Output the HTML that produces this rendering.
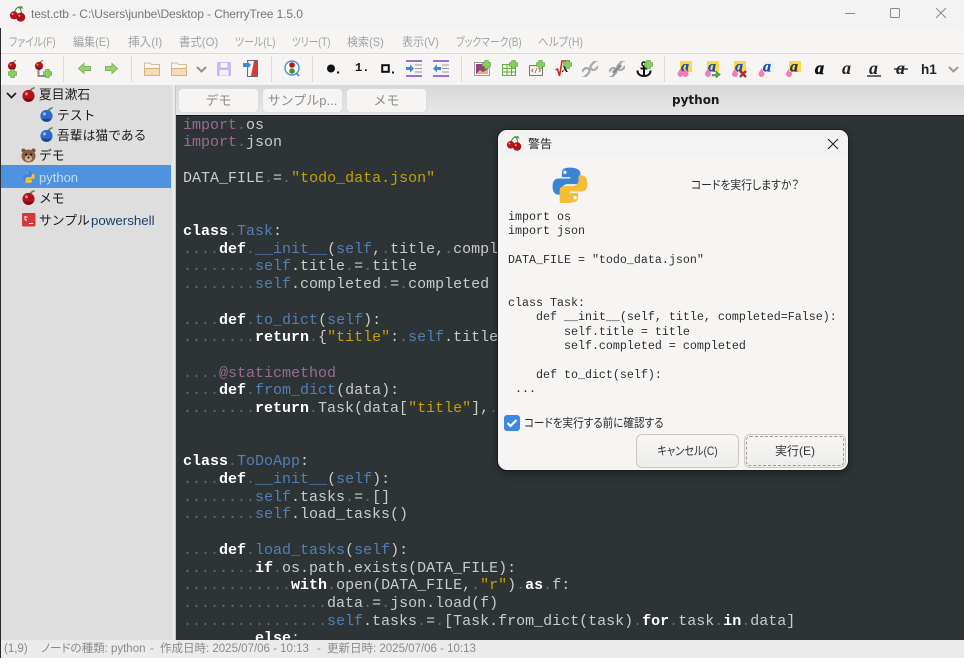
<!DOCTYPE html>
<html lang="ja"><head><meta charset="utf-8"><title>CherryTree</title>
<style>
*{box-sizing:border-box;margin:0;padding:0}
html,body{width:964px;height:658px;overflow:hidden;background:#f6f5f4}
body{position:relative;font-family:"Liberation Sans","Noto Sans CJK JP",sans-serif;color:#222}
.a{position:absolute;white-space:pre}
.p{font-feature-settings:"palt";transform-origin:0 50%}
svg{position:absolute;overflow:visible}
#tb{left:0;top:0;width:964px;height:28px;background:#f3f3f3}
#mb{left:0;top:28px;width:964px;height:26px;background:#f6f5f4;border-bottom:1px solid #dcdad8}
.m{top:34px;font-size:12px;line-height:16px;color:#a3a3a3;font-feature-settings:"palt";transform-origin:0 50%}
#tl{left:0;top:54px;width:964px;height:31px;background:#f6f5f4}
.sep{position:absolute;top:56px;width:1px;height:26px;background:#dedcda}
#tree{left:0;top:85px;width:172px;height:555px;background:#dedede}
#split{left:172px;top:85px;width:4px;height:555px;background:#e9e8e7;border-right:1px solid #c8c8c8}
#tabs{left:176px;top:85px;width:788px;height:30px;background:linear-gradient(#d8d8d8,#e6e6e6)}
.tab{position:absolute;top:88px;height:25px;background:#f6f5f4;border:1px solid #dcdcdc;border-radius:5px;text-align:center;font-size:13px;line-height:23px;color:#8d8d8d}
.t{font-size:12.8px;line-height:18px;color:#1c1c1c}
#sel{left:1px;top:165px;width:170px;height:23px;background:#4f93e0}
#code{left:176px;top:115px;width:788px;height:525px;background:#2e3436;overflow:hidden;border-top:1px solid #15191a}
#code pre{position:absolute;left:7px;top:.6px;font:15px/17.72px "Liberation Mono",monospace;color:#c9ccc6}
pre i{font-style:normal;color:#626a6c}
pre b{color:#fff}
pre em{font-style:normal;color:#4f7fb3}
pre u{text-decoration:none;color:#946c91}
pre s{text-decoration:none;color:#c4a000}
#st{left:0;top:640px;width:964px;height:18px;background:#ebebeb}
.st{top:640px;font-size:11.5px;line-height:18px;color:#8b8b8b;font-feature-settings:"palt"}
#dl{left:498px;top:130px;width:350px;height:340px;background:#f6f5f4;border-radius:9px;box-shadow:0 0 0 1px #1b1f20,0 3px 10px rgba(0,0,0,.45);overflow:hidden}
#dh{left:0;top:0;width:350px;height:28px;background:#f3f3f3}
#dcode{left:10px;top:80px;font:11.67px/14.33px "Liberation Mono",monospace;color:#2e2e2e}
.btn{position:absolute;top:304px;height:34px;border:1px solid #cdc7c2;border-radius:6px;background:linear-gradient(#f8f7f6,#eeedeb);text-align:center;font-size:12px;line-height:32px;color:#2e3436;font-feature-settings:"palt"}
.btn span{display:inline-block}
#edge{left:0;top:28px;width:1px;height:630px;background:#2a2a2a}
</style></head><body>
<svg width="0" height="0" style="position:absolute"><defs>
<symbol id="ch" viewBox="0 0 16 16"><path d="M9 7 L11.5 2.5" stroke="#4a8a2a" stroke-width="1.4" fill="none"/><path d="M10 3 L14.500 .5" stroke="#4a9a2a" stroke-width="1.6"/><circle cx="8" cy="9.500" r="6.500" fill="#b3121d"/><circle cx="5.800" cy="7.300" r="1.700" fill="#e9767c"/><path d="M2.500 12.500a6.500 6.500 0 0 0 11 0z" fill="#780d14"/></symbol>
<symbol id="bl" viewBox="0 0 16 16"><path d="M9 7 L11.5 2.5" stroke="#4a8a2a" stroke-width="1.4" fill="none"/><path d="M10 3 L14.500 .5" stroke="#4a9a2a" stroke-width="1.6"/><circle cx="8" cy="9.500" r="6.500" fill="#2f69c8"/><circle cx="5.800" cy="7.300" r="1.700" fill="#8fb8f0"/><path d="M2.500 12.500a6.500 6.500 0 0 0 11 0z" fill="#1b4390"/></symbol>
<symbol id="ch2" viewBox="0 0 20 20"><path d="M6 8 Q8 3 11 2 Q13 4 14 9" stroke="#3f7d24" stroke-width="1.1" fill="none"/><path d="M8 3 L14 1 L16 4 Q12 4 8 3z" fill="#4f9a2a"/><circle cx="5.500" cy="11.500" r="4.500" fill="#b3161f"/><circle cx="13" cy="13.500" r="5" fill="#a9121b"/><circle cx="4" cy="10" r="1.200" fill="#ee9a9a"/><circle cx="11.500" cy="12" r="1.200" fill="#ee9a9a"/></symbol>
<symbol id="py" viewBox="0 0 32 32"><path d="M15.800 .5c-7 0-7 3-7 5v3.500h7.400v1.200H5.700c-3 0-5.200 2.400-5.200 7s2 7.300 4.700 7.300h3.200v-4c0-3 2.400-5.300 5.500-5.300h7c2.500 0 4.300-1.900 4.300-4.300V5.500c0-2.600-2.500-5-9.400-5z" fill="#3b84d4"/><path d="M16.200 31.500c7 0 7-3 7-5V23h-7.400v-1.200h10.500c3 0 5.200-2.400 5.200-7s-2-7.300-4.700-7.300h-3.200v4c0 3-2.400 5.300-5.500 5.300h-7c-2.500 0-4.300 1.900-4.300 4.300v8.400c0 2.600 2.500 5 9.400 5z" fill="#f4bd38"/><circle cx="11.500" cy="4.700" r="1.500" fill="#fff"/><circle cx="20.500" cy="27.300" r="1.500" fill="#fff"/></symbol>
<symbol id="plus" viewBox="0 0 10 10"><path d="M3 .5h4v2.500h2.500v4H7v2.500H3V7H.5V3H3z" fill="#88cf62" stroke="#5aa83e" stroke-width=".7"/></symbol>
<symbol id="fold" viewBox="0 0 16 14"><path d="M.5 13.500V1h5.500l1.500 1.500h8v11z" fill="#f8f6f1" stroke="#d4bc98"/><rect x=".5" y="6.500" width="15" height="7" fill="#f5dcb2" stroke="#d0b184"/></symbol>
<symbol id="aa" viewBox="0 0 18 18"><rect x="4" y="1" width="12" height="11" fill="#ffd84a"/><text x="5" y="11.500" font-family="Liberation Serif,serif" font-style="italic" font-weight="700" font-size="16" fill="#1a4ea8" stroke="#1a4ea8" stroke-width=".3">a</text><path d="M4.500 8.500c2 3 3 4 3 5.500a3 3 0 0 1-6 0c0-1.500 1.500-3 3-5.500z" fill="#f27fb0"/><path d="M9.500 8.500c2 3 3 4 3 5.500a3 3 0 0 1-6 0c0-1.500 1.500-3 3-5.500z" fill="#f27fb0"/></symbol>
<symbol id="aa1" viewBox="0 0 18 18"><rect x="4" y="1" width="12" height="11" fill="#ffd84a"/><text x="5" y="11.500" font-family="Liberation Serif,serif" font-style="italic" font-weight="700" font-size="16" fill="#1a4ea8" stroke="#1a4ea8" stroke-width=".3">a</text><path d="M5 8.500c2 3 3 4 3 5.500a3 3 0 0 1-6 0c0-1.500 1.500-3 3-5.500z" fill="#f27fb0"/></symbol>
<symbol id="link" viewBox="0 0 16 16"><g fill="none" stroke="#a9a9a9" stroke-width="2.300"><rect x="-3" y="-3" width="6" height="11" rx="3" transform="translate(4.500 10) rotate(45)"/><rect x="-3" y="-8" width="6" height="11" rx="3" transform="translate(11.500 6) rotate(45)"/></g></symbol>
</defs></svg>

<div class="a" id="tb"></div>
<svg style="left:9px;top:5px" width="18" height="18"><use href="#ch2" width="18" height="18"/></svg>
<div class="a" style="left:31px;top:6px;font-size:12px;line-height:16px;color:#777;letter-spacing:-.1px">test.ctb - C:\Users\junbe\Desktop - CherryTree 1.5.0</div>
<svg style="left:845px;top:8px" width="100" height="12" fill="none" stroke="#8a8a8a"><path d="M0 5.500h10"/><rect x="45.500" y=".5" width="9" height="9" rx="1"/><path d="M91 0l10 10M101 0l-10 10"/></svg>

<div class="a" id="mb"></div>
<div class="a m" style="left:9px;transform:scaleX(.82)">ファイル(F)</div>
<div class="a m" style="left:73px;transform:scaleX(.92)">編集(E)</div>
<div class="a m" style="left:128px;transform:scaleX(.97)">挿入(I)</div>
<div class="a m" style="left:179px;transform:scaleX(.95)">書式(O)</div>
<div class="a m" style="left:235px;transform:scaleX(.83)">ツール(L)</div>
<div class="a m" style="left:292px;transform:scaleX(.8)">ツリー(T)</div>
<div class="a m" style="left:347px;transform:scaleX(.92)">検索(S)</div>
<div class="a m" style="left:402px;transform:scaleX(.92)">表示(V)</div>
<div class="a m" style="left:456px;transform:scaleX(.82)">ブックマーク(B)</div>
<div class="a m" style="left:538px;transform:scaleX(.88)">ヘルプ(H)</div>

<div class="a" id="tl"></div>
<i class="sep" style="left:63px"></i><i class="sep" style="left:131px"></i><i class="sep" style="left:271px"></i><i class="sep" style="left:312px"></i><i class="sep" style="left:461px"></i><i class="sep" style="left:664px"></i>

<svg style="left:7px;top:60px" width="10" height="10"><use href="#ch" width="10" height="10"/></svg>
<svg style="left:8px;top:69px" width="9" height="9"><use href="#plus" width="9" height="9"/></svg>
<svg style="left:34px;top:60px" width="10" height="10"><use href="#ch" width="10" height="10"/></svg>
<svg style="left:38px;top:70px" width="10" height="8"><path d="M.5 0v6h9" stroke="#8a8a8a" stroke-width="2" fill="none"/></svg>
<svg style="left:43px;top:69px" width="9" height="9"><use href="#plus" width="9" height="9"/></svg>
<svg style="left:78px;top:63px" width="13" height="11"><path d="M.5 5.500l5.500-5v3h6.500v4H6v3z" fill="#9ad26f" stroke="#7fb85a"/></svg>
<svg style="left:105px;top:63px" width="13" height="11"><path d="M12.500 5.500l-5.500-5v3H.5v4H7v3z" fill="#9ad26f" stroke="#7fb85a"/></svg>
<svg style="left:144px;top:62px" width="16" height="14"><use href="#fold" width="16" height="14"/></svg>
<svg style="left:171px;top:62px" width="16" height="14"><use href="#fold" width="16" height="14"/></svg>
<svg style="left:196px;top:66px" width="11" height="7"><path d="M1 1l4.500 4.500L10 1" fill="none" stroke="#8f8f8f" stroke-width="2"/></svg>
<svg style="left:217px;top:62px" width="14" height="14"><rect width="14" height="14" rx="1" fill="#cbb8ef"/><rect x="3.500" y="1" width="7" height="4.500" fill="#f6f5f4"/><rect x="2.500" y="8" width="9" height="5.500" fill="#f1eff8"/></svg>
<svg style="left:243px;top:60px" width="15" height="17"><rect x="4.500" y=".5" width="10" height="16" fill="#f2f2f2" stroke="#666"/><path d="M11 1h3v15H8z" fill="#d93a3a"/><path d="M0 3h4V1l4 4-4 4V7H0z" fill="#3d86de"/></svg>
<svg style="left:284px;top:60px" width="17" height="17"><circle cx="8" cy="8" r="7" fill="#fff" stroke="#4a8fd8" stroke-width="1.400"/><path d="M12 13l3 3" stroke="#4a8fd8" stroke-width="1.600"/><circle cx="8" cy="5" r="2.800" fill="#b3161f"/><circle cx="8" cy="11" r="2.800" fill="#4f8a2a"/></svg>

<svg style="left:326px;top:64px" width="14" height="10"><circle cx="5" cy="4.500" r="4" fill="#111"/><rect x="11" y="7.500" width="2" height="2" fill="#111"/></svg>
<div class="a" style="left:355px;top:60px;font:700 12px/17px 'Liberation Mono',monospace;color:#111">1.</div>
<svg style="left:381px;top:64px" width="14" height="10"><rect x="1.200" y="1.200" width="6.600" height="6.600" fill="none" stroke="#111" stroke-width="2"/><rect x="11" y="7.500" width="2" height="2" fill="#111"/></svg>
<svg style="left:406px;top:60px" width="16" height="17"><path d="M0 1h16M0 16h16" stroke="#9d6ed6" stroke-width="2"/><path d="M9 5h7M9 8.500h7M9 12h7" stroke="#999"/><path d="M0 7h4V4.500L8 8.500 4 12.500V10H0z" fill="#3d86de"/></svg>
<svg style="left:433px;top:60px" width="16" height="17"><path d="M0 1h16M0 16h16" stroke="#9d6ed6" stroke-width="2"/><path d="M9 5h7M9 8.500h7M9 12h7" stroke="#999"/><path d="M8 7H4V4.500L0 8.500 4 12.500V10h4z" fill="#3d86de"/></svg>

<svg style="left:474px;top:62px" width="16" height="14"><rect x=".5" y=".5" width="15" height="13" fill="#fff" stroke="#9a9a9a"/><rect x="2" y="2" width="12" height="10" fill="#93407f"/><path d="M2 12l4-4 3 2 5-3v5z" fill="#e9b36a"/></svg>
<svg style="left:482px;top:60px" width="9" height="9"><use href="#plus" width="9" height="9"/></svg>
<svg style="left:502px;top:64px" width="14" height="12"><rect x=".5" y=".5" width="13" height="11" fill="#eaf5e0" stroke="#6fa84e"/><path d="M.5 4.500h13M.5 8h13M5 .5v11M9.500 .5v11" stroke="#6fa84e"/></svg>
<svg style="left:509px;top:60px" width="9" height="9"><use href="#plus" width="9" height="9"/></svg>
<svg style="left:529px;top:65px" width="15" height="11"><rect x=".5" y=".5" width="13" height="10" fill="#f4f4f4" stroke="#777"/><path d="M4 4L2.500 5.500 4 7M10 4l1.500 1.500L10 7M8 3L6 8" stroke="#e0602a" fill="none"/></svg>
<svg style="left:536px;top:60px" width="9" height="9"><use href="#plus" width="9" height="9"/></svg>
<svg style="left:555px;top:60px" width="15" height="18"><path d="M.5 10l2-1 2 7L7 1h8" fill="none" stroke="#d81e1e" stroke-width="1.500"/></svg>
<div class="a" style="left:562px;top:60px;font:italic 700 13px/16px 'Liberation Serif',serif;color:#111">x</div>
<svg style="left:563px;top:60px" width="9" height="9"><use href="#plus" width="9" height="9"/></svg>
<svg style="left:582px;top:61px" width="16" height="16"><use href="#link" width="16" height="16"/></svg>
<svg style="left:609px;top:61px" width="16" height="16"><use href="#link" width="16" height="16"/><path d="M4 12L12 4" stroke="#8d8d8d" stroke-width="3"/></svg>
<svg style="left:637px;top:61px" width="16" height="17"><circle cx="7" cy="3" r="2" fill="none" stroke="#111" stroke-width="1.500"/><path d="M7 5v10M3.500 7.500h7M.5 9.500c0 4 3 5.500 6.500 5.500s6.500-1.500 6.500-5.500" fill="none" stroke="#111" stroke-width="2"/></svg>
<svg style="left:644px;top:60px" width="9" height="9"><use href="#plus" width="9" height="9"/></svg>

<svg style="left:676px;top:60px" width="18" height="18"><use href="#aa" width="18" height="18"/></svg>
<svg style="left:703px;top:60px" width="18" height="18"><use href="#aa1" width="18" height="18"/></svg>
<svg style="left:712px;top:71px" width="9" height="7"><path d="M0 3.500h4V0l4.500 3.500L4 7V5H0z" fill="#5aa53a" stroke="#3f8228" stroke-width=".5"/></svg>
<svg style="left:730px;top:60px" width="18" height="18"><use href="#aa1" width="18" height="18"/></svg>
<svg style="left:739px;top:70px" width="8" height="8"><path d="M1 1l6 6M7 1L1 7" stroke="#b52a2a" stroke-width="2.400"/></svg>
<svg style="left:757px;top:60px" width="18" height="18"><path d="M4.500 8.500c2 3 3 4 3 5.500a3 3 0 0 1-6 0c0-1.500 1.500-3 3-5.500z" fill="#f27fb0"/><rect x="6" y="1" width="12" height="11" fill="#eef0f8"/><text x="6" y="11.500" font-family="Liberation Serif,serif" font-style="italic" font-weight="700" font-size="16" fill="#1a4ea8" stroke="#1a4ea8" stroke-width=".3">a</text></svg>
<svg style="left:785px;top:60px" width="18" height="18"><path d="M4 8.500c2 3 3 4 3 5.500a3 3 0 0 1-6 0c0-1.500 1.500-3 3-5.500z" fill="#f27fb0"/><rect x="4" y="1" width="12" height="11" fill="#ffd84a"/><text x="5" y="11.500" font-family="Liberation Serif,serif" font-style="italic" font-weight="700" font-size="16" fill="#333" stroke="#333" stroke-width=".3">a</text></svg>
<div class="a" style="left:815px;top:58px;font:italic 700 18px/20px 'Liberation Serif',serif;color:#111;-webkit-text-stroke:.6px #111">a</div>
<div class="a" style="left:842px;top:58px;font:italic 700 18px/20px 'Liberation Serif',serif;color:#222">a</div>
<div class="a" style="left:869px;top:58px;font:italic 700 18px/20px 'Liberation Serif',serif;color:#222">a</div>
<svg style="left:867px;top:75px" width="14" height="2"><path d="M0 1h14" stroke="#222" stroke-width="1.300"/></svg>
<div class="a" style="left:896px;top:58px;font:italic 700 18px/20px 'Liberation Serif',serif;color:#222">a</div>
<svg style="left:894px;top:68px" width="14" height="2"><path d="M0 1h14" stroke="#222" stroke-width="1.300"/></svg>
<div class="a" style="left:921px;top:62px;font:700 13.500px/16px 'Liberation Sans',sans-serif;color:#222">h1</div>
<svg style="left:948px;top:66px" width="11" height="7"><path d="M1 1l4.500 4.500L10 1" fill="none" stroke="#9a9a9a" stroke-width="2"/></svg>

<div class="a" id="tree"></div>
<div class="a" id="split"></div>
<div class="a" id="sel"></div>
<svg style="left:6px;top:92px" width="11" height="8"><path d="M1 1l4.500 4.500L10 1" fill="none" stroke="#222" stroke-width="1.800"/></svg>
<svg style="left:21px;top:87px" width="15" height="15"><use href="#ch" width="15" height="15"/></svg>
<div class="a t" style="left:39px;top:86px">夏目漱石</div>
<svg style="left:39px;top:107px" width="15" height="15"><use href="#bl" width="15" height="15"/></svg>
<div class="a t" style="left:57px;top:107px">テスト</div>
<svg style="left:39px;top:127px" width="15" height="15"><use href="#bl" width="15" height="15"/></svg>
<div class="a t" style="left:57px;top:127px">吾輩は猫である</div>
<svg style="left:21px;top:148px" width="15" height="15" viewBox="0 0 15 15"><circle cx="2.500" cy="2.500" r="2" fill="#7a5138"/><circle cx="12.500" cy="2.500" r="2" fill="#7a5138"/><ellipse cx="7.500" cy="8" rx="7" ry="6.500" fill="#8a5f45"/><ellipse cx="7.500" cy="10.500" rx="3.500" ry="3" fill="#d9b48f"/><circle cx="5" cy="6.500" r="1" fill="#111"/><circle cx="10" cy="6.500" r="1" fill="#111"/><circle cx="7.500" cy="9.500" r="1" fill="#111"/></svg>
<div class="a t" style="left:39px;top:147px">デモ</div>
<svg style="left:23px;top:171px" width="12" height="12"><use href="#py" width="12" height="12"/></svg>
<div class="a t" style="left:39px;top:169px;color:#c4dcf6;font-size:13px">python</div>
<svg style="left:21px;top:190px" width="15" height="15"><use href="#ch" width="15" height="15"/></svg>
<div class="a t" style="left:39px;top:190px">メモ</div>
<svg style="left:22px;top:213px" width="14" height="14"><rect width="13.500" height="13.500" rx="1.500" fill="#d23a3a"/><path d="M3 3v4M5.500 4H3.500M3 7h2M7 10.500h4" stroke="#fff" stroke-width="1"/></svg>
<div class="a t" style="left:39px;top:212px">サンプル</div>
<div class="a t" style="left:91px;top:212px;color:#1c3f66;font-size:13.300px">powershell</div>

<div class="a" id="tabs"></div>
<div class="tab" style="left:178px;width:81px">デモ</div>
<div class="tab" style="left:262px;width:81px">サンプルp...</div>
<div class="tab" style="left:346px;width:81px">メモ</div>
<div class="a" style="left:672px;top:92px;font:700 12px/17px 'DejaVu Sans',sans-serif;color:#1a1a1a">python</div>

<div class="a" id="code"><pre><u>import</u><i>.</i>os
<u>import</u><i>.</i>json

DATA_FILE<i>.</i>=<i>.</i><s>"todo_data.json"</s>


<b>class</b><i>.</i><em>Task</em>:
<i>....</i><b>def</b><i>.</i><em>__init__</em>(<em>self</em>,<i>.</i>title,<i>.</i>completed=False):
<i>........</i><em>self</em>.title<i>.</i>=<i>.</i>title
<i>........</i><em>self</em>.completed<i>.</i>=<i>.</i>completed

<i>....</i><b>def</b><i>.</i><em>to_dict</em>(<em>self</em>):
<i>........</i><b>return</b><i>.</i>{<s>"title"</s>:<i>.</i><em>self</em>.title,

<i>....</i><u>@staticmethod</u>
<i>....</i><b>def</b><i>.</i><em>from_dict</em>(data):
<i>........</i><b>return</b><i>.</i>Task(data[<s>"title"</s>],<i>.</i>data[<s>"completed"</s>])


<b>class</b><i>.</i><em>ToDoApp</em>:
<i>....</i><b>def</b><i>.</i><em>__init__</em>(<em>self</em>):
<i>........</i><em>self</em>.tasks<i>.</i>=<i>.</i>[]
<i>........</i><em>self</em>.load_tasks()

<i>....</i><b>def</b><i>.</i><em>load_tasks</em>(<em>self</em>):
<i>........</i><b>if</b><i>.</i>os.path.exists(DATA_FILE):
<i>............</i><b>with</b><i>.</i>open(DATA_FILE,<i>.</i><s>"r"</s>)<i>.</i><b>as</b><i>.</i>f:
<i>................</i>data<i>.</i>=<i>.</i>json.load(f)
<i>................</i><em>self</em>.tasks<i>.</i>=<i>.</i>[Task.from_dict(task)<i>.</i><b>for</b><i>.</i>task<i>.</i><b>in</b><i>.</i>data]
<i>........</i><b>else</b>:</pre></div>

<div class="a" id="st"></div>
<div class="a st" style="left:4px">(1,9)</div>
<div class="a st" style="left:41px">ノードの種類: python</div>
<div class="a st" style="left:150px">-</div>
<div class="a st" style="left:160px">作成日時: 2025/07/06 - 10:13</div>
<div class="a st" style="left:317px">-</div>
<div class="a st" style="left:327px">更新日時: 2025/07/06 - 10:13</div>
<div class="a" id="edge"></div>

<div class="a" id="dl">
<div class="a" id="dh"></div>
<svg style="left:8px;top:5px" width="17" height="17"><use href="#ch2" width="17" height="17"/></svg>
<div class="a" style="left:30px;top:6px;font-size:12px;line-height:16px;color:#222">警告</div>
<svg style="left:330px;top:9px" width="10" height="10"><path d="M0 0l10 10M10 0L0 10" stroke="#222" stroke-width="1.100"/></svg>
<svg style="left:54px;top:37px" width="36" height="36"><use href="#py" width="36" height="36"/></svg>
<div class="a p" style="left:193px;top:47px;font-size:12px;line-height:17px;color:#2a2a2a;transform:scaleX(.9)">コードを実行しますか？</div>
<div class="a" id="dcode">import os
import json

DATA_FILE = "todo_data.json"


class Task:
    def __init__(self, title, completed=False):
        self.title = title
        self.completed = completed

    def to_dict(self):
 ...</div>
<div class="a" style="left:6px;top:285px;width:16px;height:16px;background:#3f88e0;border-radius:3px"></div>
<svg style="left:6px;top:285px" width="16" height="16"><path d="M3.500 8l3 3 6-6" fill="none" stroke="#fff" stroke-width="2.200"/></svg>
<div class="a p" style="left:26px;top:285px;font-size:12px;line-height:17px;color:#2a2a2a;transform:scaleX(.88)">コードを実行する前に確認する</div>
<div class="btn" style="left:138px;width:103px"><span style="transform:scaleX(.85)">キャンセル(C)</span></div>
<div class="btn" style="left:246px;width:102px;outline:1px dashed #9a9a9a;outline-offset:-3px">実行(E)</div>
</div>
</body></html>
